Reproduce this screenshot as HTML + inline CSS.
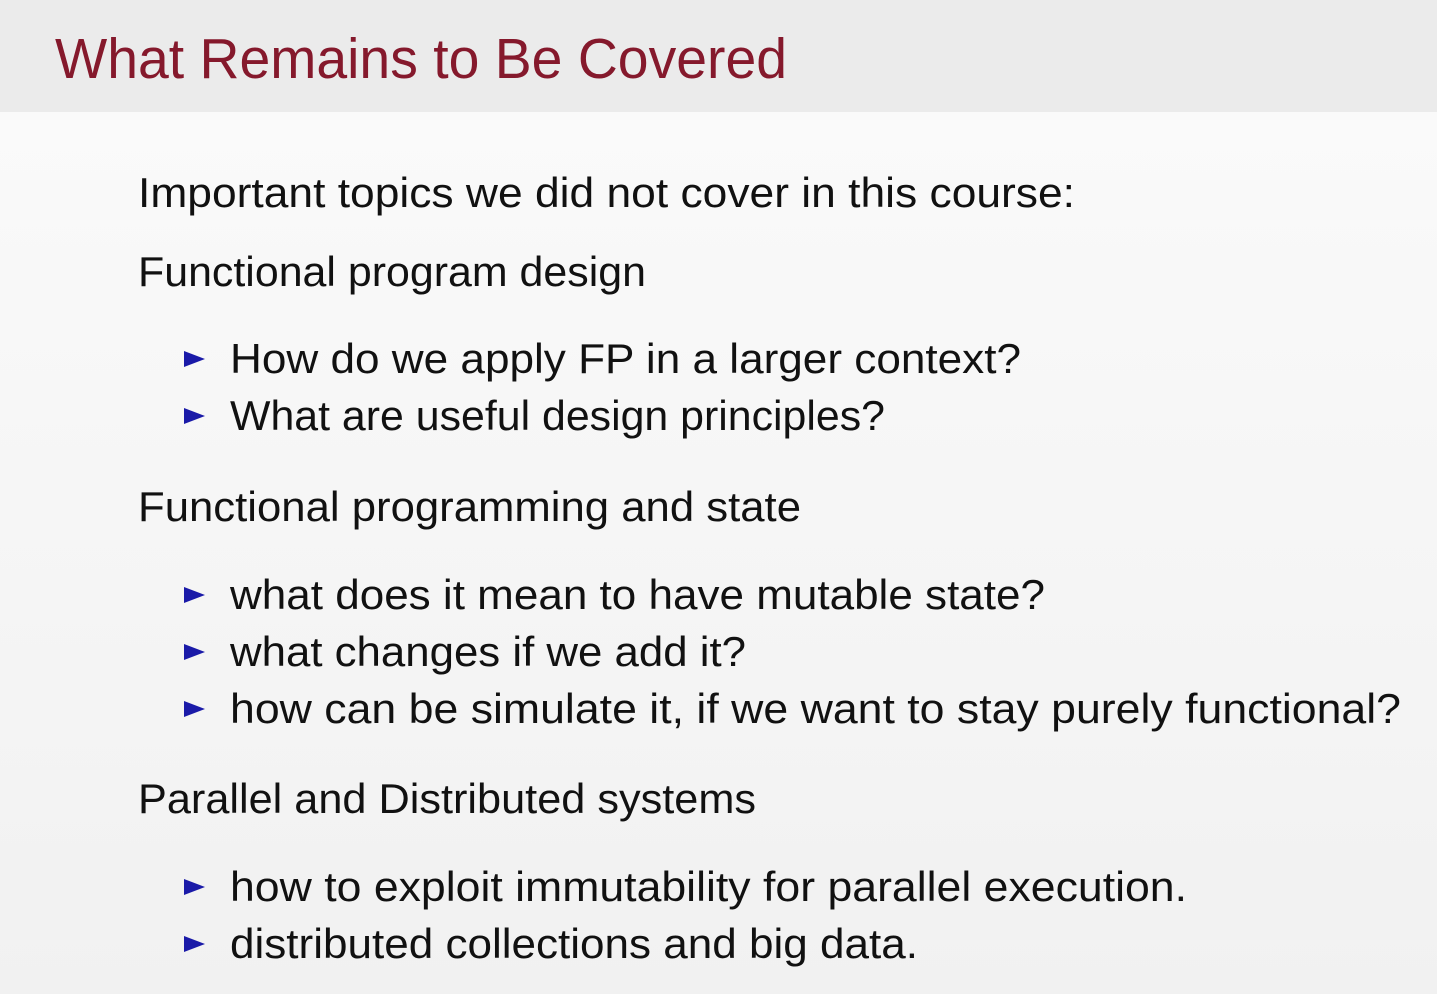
<!DOCTYPE html>
<html><head><meta charset="utf-8"><style>
html,body{margin:0;padding:0;width:1437px;height:994px;overflow:hidden;background:#f9f9f9}
svg{display:block}
text{font-family:"Liberation Sans",sans-serif}
</style></head><body>
<svg width="1437" height="994" viewBox="0 0 1437 994">
<defs><linearGradient id="g" x1="0" y1="0" x2="0" y2="1"><stop offset="0" stop-color="#fbfbfb"/><stop offset="1" stop-color="#f1f1f1"/></linearGradient></defs>
<rect width="1437" height="994" fill="url(#g)"/>
<rect width="1437" height="112" fill="#ebebeb"/>
<text x="55" y="78" font-size="57" fill="#85192c" textLength="732" lengthAdjust="spacingAndGlyphs">What Remains to Be Covered</text>
<g fill="#111" font-size="42">
<text x="138" y="207" textLength="937" lengthAdjust="spacingAndGlyphs">Important topics we did not cover in this course:</text>
<text x="138" y="286" textLength="508" lengthAdjust="spacingAndGlyphs">Functional program design</text>
<text x="230" y="373" textLength="791" lengthAdjust="spacingAndGlyphs">How do we apply FP in a larger context?</text>
<text x="230" y="430" textLength="655" lengthAdjust="spacingAndGlyphs">What are useful design principles?</text>
<text x="138" y="521" textLength="663" lengthAdjust="spacingAndGlyphs">Functional programming and state</text>
<text x="230" y="609" textLength="815" lengthAdjust="spacingAndGlyphs">what does it mean to have mutable state?</text>
<text x="230" y="666" textLength="516" lengthAdjust="spacingAndGlyphs">what changes if we add it?</text>
<text x="230" y="723" textLength="1171" lengthAdjust="spacingAndGlyphs">how can be simulate it, if we want to stay purely functional?</text>
<text x="138" y="813" textLength="618" lengthAdjust="spacingAndGlyphs">Parallel and Distributed systems</text>
<text x="230" y="901" textLength="957" lengthAdjust="spacingAndGlyphs">how to exploit immutability for parallel execution.</text>
<text x="230" y="958" textLength="688" lengthAdjust="spacingAndGlyphs">distributed collections and big data.</text>
</g>
<g fill="#1a1aa8">
<path d="M184 351 L205 359 L184 367Z"/>
<path d="M184 408 L205 416 L184 424Z"/>
<path d="M184 587 L205 595 L184 603Z"/>
<path d="M184 644 L205 652 L184 660Z"/>
<path d="M184 701 L205 709 L184 717Z"/>
<path d="M184 879 L205 887 L184 895Z"/>
<path d="M184 936 L205 944 L184 952Z"/>
</g>
</svg>
</body></html>
